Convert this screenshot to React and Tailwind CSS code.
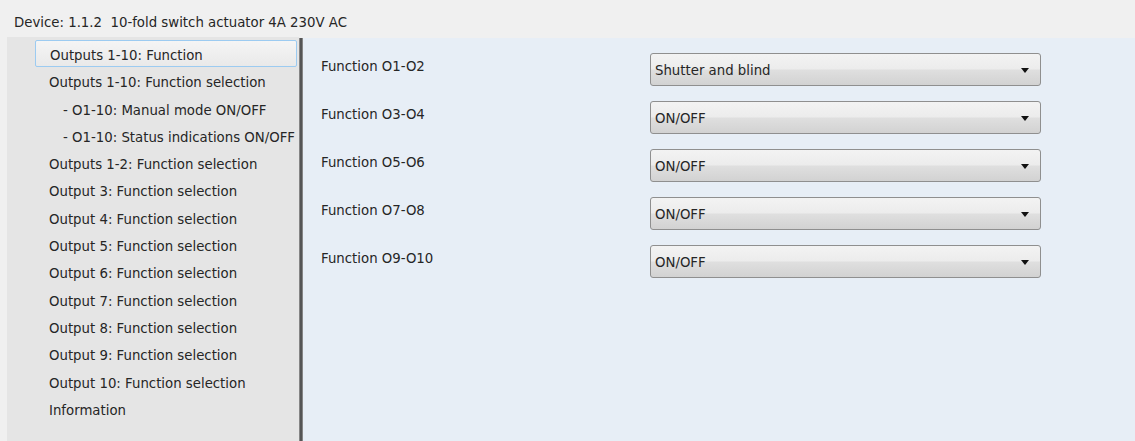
import React from "react"

const pages = [
  { label: "Outputs 1-10: Function", selected: true },
  { label: "Outputs 1-10: Function selection" },
  { label: "- O1-10: Manual mode ON/OFF", sub: true },
  { label: "- O1-10: Status indications ON/OFF", sub: true },
  { label: "Outputs 1-2: Function selection" },
  { label: "Output 3: Function selection" },
  { label: "Output 4: Function selection" },
  { label: "Output 5: Function selection" },
  { label: "Output 6: Function selection" },
  { label: "Output 7: Function selection" },
  { label: "Output 8: Function selection" },
  { label: "Output 9: Function selection" },
  { label: "Output 10: Function selection" },
  { label: "Information" },
]

const params = [
  { name: "Function O1-O2", value: "Shutter and blind" },
  { name: "Function O3-O4", value: "ON/OFF" },
  { name: "Function O5-O6", value: "ON/OFF" },
  { name: "Function O7-O8", value: "ON/OFF" },
  { name: "Function O9-O10", value: "ON/OFF" },
]

function Combo({ value }) {
  return (
    <div className="w-[391px] h-[33px] shrink-0 rounded-[3px] border border-[#8f8f8f] bg-[linear-gradient(#f3f3f3_0%,#ececec_48%,#dfdfdf_52%,#d2d2d2_100%)] flex items-center pl-[4px] pr-[11px] pt-[2px]">
      <span className="flex-1 whitespace-nowrap">{value}</span>
      <svg width="8" height="5" viewBox="0 0 8 5" className="mb-[1px]">
        <path d="M0 0h8L4 5z" fill="#111" />
      </svg>
    </div>
  )
}

export default function App() {
  return (
    <div
      className="w-[1135px] h-[441px] flex flex-col bg-[#f0f0f0] text-[13.3px] leading-4 text-[#262626] overflow-hidden"
      style={{ fontFamily: '"DejaVu Sans", Tahoma, sans-serif' }}
    >
      {/* device title */}
      <div className="h-[37px] shrink-0 pl-[14px] pt-[15px] whitespace-pre">
        Device: 1.1.2  10-fold switch actuator 4A 230V AC
      </div>

      <div className="flex-1 flex min-h-0">
        {/* parameter pages */}
        <div className="ml-[7px] w-[292px] bg-[#e5e5e5] pt-[3px]">
          {pages.map((p) => (
            <div
              key={p.label}
              className={
                "ml-[28px] mr-[2px] h-[27.3px] pt-[7px] border whitespace-nowrap overflow-hidden " +
                (p.selected
                  ? "rounded-[2px] border-[#9ccbf1] bg-[linear-gradient(#f5f5f5,#e9e9e9)] pl-[14px]"
                  : "border-transparent " + (p.sub ? "pl-[27px]" : "pl-[13px]"))
              }
            >
              {p.label}
            </div>
          ))}
        </div>

        {/* splitter */}
        <div className="w-[4px] mt-[1px] border-l border-r border-[#858585] bg-[#555]" />

        {/* parameters */}
        <div className="flex-1 mt-[1px] bg-[#e7eef6] pt-[15px] pl-[18px] flex flex-col gap-[15px]">
          {params.map((p) => (
            <div key={p.name} className="flex items-start">
              <div className="w-[329px] shrink-0 pt-[6px]">{p.name}</div>
              <Combo value={p.value} />
            </div>
          ))}
        </div>
      </div>
    </div>
  )
}
